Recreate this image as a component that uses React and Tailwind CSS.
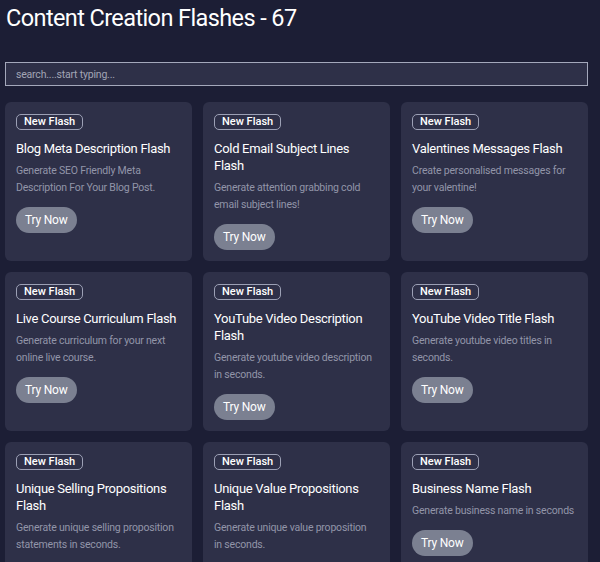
import React from 'react';

const flashes = [
  { title: 'Blog Meta Description Flash', desc: 'Generate SEO Friendly Meta Description For Your Blog Post.' },
  { title: 'Cold Email Subject Lines Flash', desc: 'Generate attention grabbing cold email subject lines!' },
  { title: 'Valentines Messages Flash', desc: 'Create personalised messages for your valentine!' },
  { title: 'Live Course Curriculum Flash', desc: 'Generate curriculum for your next online live course.' },
  { title: 'YouTube Video Description Flash', desc: 'Generate youtube video description in seconds.' },
  { title: 'YouTube Video Title Flash', desc: 'Generate youtube video titles in seconds.' },
  { title: 'Unique Selling Propositions Flash', desc: 'Generate unique selling proposition statements in seconds.' },
  { title: 'Unique Value Propositions Flash', desc: 'Generate unique value proposition in seconds.' },
  { title: 'Business Name Flash', desc: 'Generate business name in seconds' },
];

const font = { fontFamily: 'Roboto, "Liberation Sans", sans-serif' };

const FlashCard = ({ flash }) => (
  <div className="bg-[#2e3048] rounded-md h-[159px] pt-3 px-[11px]">
    <span className="block w-fit h-4 leading-[14px] px-[7px] border border-[#9ca0b5] rounded-[5px] text-[11px] font-medium text-white">
      New Flash
    </span>
    <h3 className="mt-[10px] text-[13px] leading-[17px] tracking-[-0.3px] text-white">{flash.title}</h3>
    <p className="mt-[5px] text-[10.5px] leading-[17px] tracking-[-0.2px] text-[#9295a8] max-w-[162.5px]">{flash.desc}</p>
    <button className="mt-[11px] h-[26px] px-[9px] rounded-[13px] bg-[#7b8091] text-white text-[12px] tracking-[-0.2px]">
      Try Now
    </button>
  </div>
);

export default function App() {
  return (
    <div className="min-h-[562px] bg-[#1c1e35] pl-[5px] pr-[12px] pt-[3px]" style={font}>
      <h1 className="pl-px text-[23.5px] leading-[30px] tracking-[-0.6px] text-white">Content Creation Flashes - 67</h1>
      <input
        className="mt-[29px] block w-full h-[24px] bg-[#2e3048] border border-[#a4a8bb] px-[10px] text-[10.5px] tracking-[-0.2px] text-white placeholder-[#a2a5b5] outline-none"
        placeholder="search....start typing..."
        style={font}
      />
      <div className="mt-[16px] grid grid-cols-3 gap-[11px]">
        {flashes.map((f) => (
          <FlashCard key={f.title} flash={f} />
        ))}
      </div>
    </div>
  );
}
